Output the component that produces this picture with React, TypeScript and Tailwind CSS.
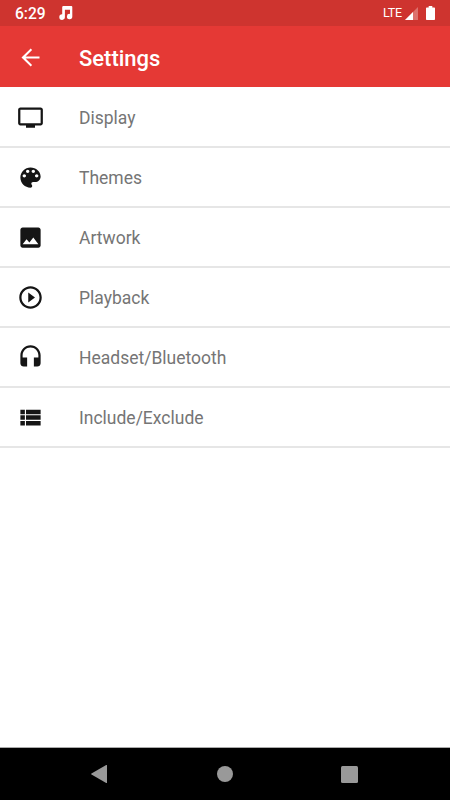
import React from "react";

type Item = { label: string; path: string };

const items: Item[] = [
  {
    label: "Display",
    path: "M21 3H3c-1.11 0-2 .89-2 2v12c0 1.1.89 2 2 2h5v2h8v-2h5c1.1 0 1.99-.9 1.99-2L23 5c0-1.11-.9-2-2-2zm0 14H3V5h18v12z",
  },
  {
    label: "Themes",
    path: "M12 3c-4.97 0-9 4.03-9 9s4.03 9 9 9c.83 0 1.5-.67 1.5-1.5 0-.39-.15-.74-.39-1.01-.23-.26-.38-.61-.38-.99 0-.83.67-1.5 1.5-1.5H16c2.76 0 5-2.24 5-5 0-4.42-4.03-8-9-8zm-5.5 9c-.83 0-1.5-.67-1.5-1.5S5.67 9 6.5 9 8 9.67 8 10.5 7.33 12 6.5 12zm3-4C8.67 8 8 7.33 8 6.5S8.67 5 9.5 5s1.5.67 1.5 1.5S10.33 8 9.5 8zm5 0c-.83 0-1.5-.67-1.5-1.5S13.67 5 14.5 5s1.5.67 1.5 1.5S15.33 8 14.5 8zm3 4c-.83 0-1.5-.67-1.5-1.5S16.67 9 17.5 9s1.5.67 1.5 1.5-.67 1.5-1.5 1.5z",
  },
  {
    label: "Artwork",
    path: "M21 19V5c0-1.1-.9-2-2-2H5c-1.1 0-2 .9-2 2v14c0 1.1.9 2 2 2h14c1.1 0 2-.9 2-2zM8.5 13.5l2.5 3.01L14.5 12l4.5 6H5l3.5-4.5z",
  },
  {
    label: "Playback",
    path: "M10 16.5l6-4.5-6-4.5v9zM12 2C6.48 2 2 6.48 2 12s4.48 10 10 10 10-4.48 10-10S17.52 2 12 2zm0 18c-4.41 0-8-3.59-8-8s3.59-8 8-8 8 3.59 8 8-3.59 8-8 8z",
  },
  {
    label: "Headset/Bluetooth",
    path: "M12 1c-4.97 0-9 4.03-9 9v7c0 1.66 1.34 3 3 3h3v-8H5v-2c0-3.87 3.13-7 7-7s7 3.13 7 7v2h-4v8h3c1.66 0 3-1.34 3-3v-7c0-4.97-4.03-9-9-9z",
  },
  {
    label: "Include/Exclude",
    path: "M3 14h4v-4H3v4zm0 5h4v-4H3v4zM3 9h4V5H3v4zm5 5h13v-4H8v4zm0 5h13v-4H8v4zM8 5v4h13V5H8z",
  },
];

function StatusBar() {
  return (
    <div className="flex h-[26px] items-center bg-[#ce342f] pr-[15px] pl-[15px] text-white">
      <span className="mt-[3px] w-[31px] text-[15.6px] leading-none font-medium">6:29</span>
      <svg className="ml-[13px] h-[14px] w-[14px]" viewBox="0 0 14 14" fill="currentColor">
        <path d="M3.2 1.2Q3.2 0 4.4 0h7.9q1 0 1 1v9.6a2.7 2.7 0 1 1-2.3-2.7V3.8H5.9v7.3a2.8 2.8 0 1 1-2.7-2.8z" />
      </svg>
      <div className="ml-auto flex items-center">
        <span className="mt-px text-[12.5px] leading-none tracking-[-0.2px]">LTE</span>
        <svg className="mt-px ml-[3px] h-[13px] w-[13px]" viewBox="0 0 13 13" fill="currentColor">
          <path d="M13 0v13H0z" opacity=".3" />
          <path d="M8 5v8H0z" />
        </svg>
        <svg className="ml-[8px] h-[14px] w-[9px]" viewBox="0 0 9 14" fill="currentColor">
          <path d="M2.7 0h3.6v1.4H8c.6 0 1 .4 1 1V13c0 .6-.4 1-1 1H1c-.6 0-1-.4-1-1V2.4c0-.6.4-1 1-1h1.7z" />
        </svg>
      </div>
    </div>
  );
}

export default function App() {
  return (
    <div className="flex h-[800px] w-[450px] flex-col overflow-hidden bg-white font-[Roboto,sans-serif]">
      <StatusBar />
      <header className="flex h-[61px] items-center bg-[#e53935] pl-[17px] text-white">
        <svg className="mt-px h-[27px] w-[27px]" viewBox="0 0 24 24" fill="currentColor">
          <path d="M20 11.1H7.6l5.8-5.8L12.2 4.1 4 12l8.2 7.9 1.2-1.2-5.8-5.8H20z" />
        </svg>
        <h1 className="mt-[4px] ml-[35px] text-[22px] leading-none font-medium">Settings</h1>
      </header>
      <ul className="pt-px">
        {items.map((item) => (
          <li key={item.label} className="flex h-[60px] items-center border-b-2 border-[#e6e6e6] pl-[17px]">
            <svg className="h-[27px] w-[27px] text-[#151515]" viewBox="0 0 24 24" fill="currentColor">
              <path d={item.path} />
            </svg>
            <span className="mt-[3px] ml-[35px] text-[17.5px] leading-none text-[#757575]">{item.label}</span>
          </li>
        ))}
      </ul>
      <nav className="mt-auto flex h-[53px] items-center border-t border-[#aaa] bg-black pl-[91px] text-[#999]">
        <svg className="h-[18px] w-[16px]" viewBox="0 0 16 18" fill="currentColor">
          <path d="M15.2 0q.8-.3.8.6v16.8q0 .9-.8.6L.5 9.6q-.9-.6 0-1.2z" />
        </svg>
        <span className="ml-[110px] h-4 w-4 rounded-full bg-[#999]" />
        <span className="ml-[108px] h-[17px] w-[17px] rounded-[1.5px] bg-[#999]" />
      </nav>
    </div>
  );
}
